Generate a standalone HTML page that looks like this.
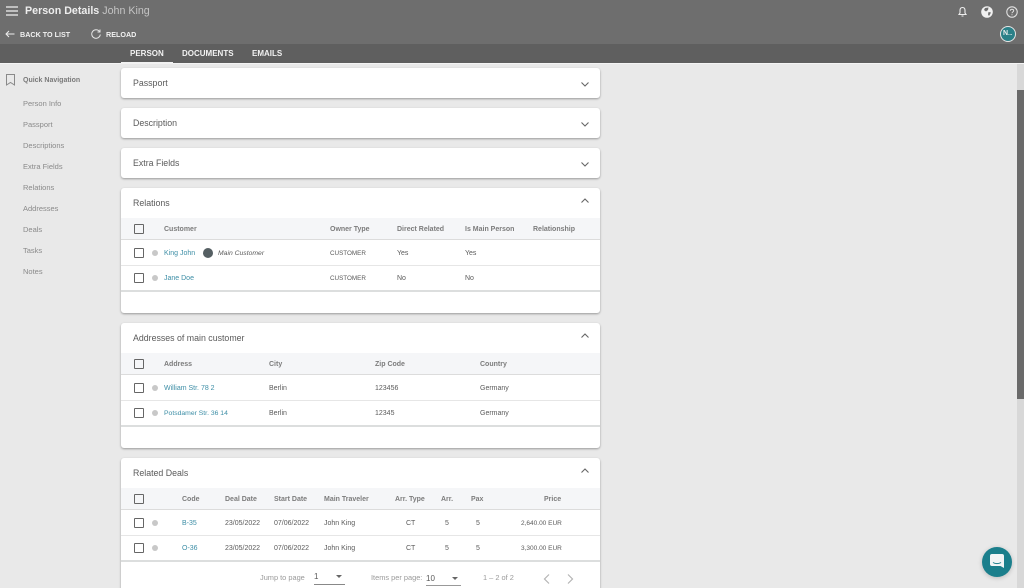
<!DOCTYPE html>
<html style="height:588px;overflow:hidden"><head><meta charset="utf-8"><style>
html,body{margin:0;padding:0}
body{width:1024px;height:588px;overflow:hidden;background:#e9e9e9;font-family:"Liberation Sans",sans-serif;color:#555}
#p{position:absolute;left:0;top:0;width:1024px;height:588px;overflow:hidden;background:#e9e9e9}
.a,.t{position:absolute}
.t{white-space:nowrap;line-height:12px;font-size:7px;color:#5a5a5a;margin-top:1px}
.n{font-size:7.5px;color:#8a8a8a;left:23px;margin-top:0}
.h{font-weight:bold;font-size:7px;color:#7c7c7c}
.l{color:#3d8ea6}
.ti{font-size:8.8px;color:#5a5a5a;left:133px;margin-top:0}
.pg{font-size:7.4px;color:#9a9a9a;margin-top:0}
.card{position:absolute;left:121px;width:479px;background:#fff;border-radius:3px;box-shadow:0 1px 2px rgba(0,0,0,.35)}
.cb{position:absolute;left:134px;width:8px;height:8px;border:1.2px solid #666;border-radius:1px}
.dot{position:absolute;left:152px;width:6px;height:6px;border-radius:50%;background:#c8c8c8}
.hd{position:absolute;left:121px;width:479px;height:21px;background:#f5f6f8;border-bottom:1px solid #dcdcdc}
.ln{position:absolute;left:121px;width:479px;height:1px;background:#e6e6e6}
.ln2{position:absolute;left:121px;width:479px;height:1.5px;background:#dcdede}
svg{position:absolute;overflow:visible}
.w{color:#f2f2f2;font-weight:bold;font-size:7.2px}
</style></head><body><div id="p">
<div class="a" style="left:0;top:0;width:1024px;height:44px;background:#6e6e6e"></div>
<div class="a" style="left:0;top:44px;width:1024px;height:19px;background:#5f5f5f"></div>
<div class="a" style="left:0;top:63px;width:1024px;height:1px;background:#f4f4f4"></div>
<div class="a" style="left:1017px;top:64px;width:7px;height:524px;background:#d8d8d8"></div>
<div class="a" style="left:1017px;top:90px;width:7px;height:309px;background:#6a6a6a"></div>

<svg style="left:6px;top:6px" width="12" height="10"><path d="M0 1H12M0 5H12M0 9H12" stroke="#f0f0f0" stroke-width="1.2"/></svg>
<div class="t" style="left:25px;top:5px;margin:0;font-size:10.7px;line-height:13px;font-weight:bold;color:#eee">Person Details <span style="font-weight:normal;color:#c4c4c4">John King</span></div>

<svg style="left:5px;top:30px" width="10" height="8"><path d="M9.500 4H1M4 1L1 4L4 7" fill="none" stroke="#eee" stroke-width="1"/></svg>
<div class="t w" style="left:20px;top:28px">BACK TO LIST</div>
<svg style="left:91px;top:29px" width="10" height="10"><path d="M8.500 2.500A4.300 4.300 0 1 0 9.300 5.500M9 .5V3H6.500" fill="none" stroke="#e4e4e4" stroke-width="1"/></svg>
<div class="t w" style="left:106px;top:28px">RELOAD</div>

<div class="t w" style="left:130px;top:47px;font-size:8px">PERSON</div>
<div class="t w" style="left:182px;top:47px;font-size:8px">DOCUMENTS</div>
<div class="t w" style="left:252px;top:47px;font-size:8px">EMAILS</div>
<div class="a" style="left:121px;top:62px;width:52px;height:1.500px;background:#f2f2f2"></div>

<svg style="left:957px;top:6px" width="11" height="12"><path d="M5.500 1.500C3.500 1.500 3 3 3 4.500V7L2 8.500H9L8 7V4.500C8 3 7.500 1.500 5.500 1.500Z" fill="none" stroke="#eee" stroke-width="1.100"/><path d="M4.500 10H6.500" stroke="#eee" stroke-width="1"/></svg>
<svg style="left:981px;top:6px" width="12" height="12"><circle cx="6" cy="6" r="5.800" fill="#f0f0f0"/><path d="M4 2L7.500 1.500L7 4L5 5.500L3 4ZM7.500 6L10 6.500L8 10L7 8.500Z" fill="#6e6e6e"/></svg>
<svg style="left:1006px;top:6px" width="12" height="12"><circle cx="6" cy="6" r="5.200" fill="none" stroke="#e0e0e0" stroke-width="1.100"/><path d="M4.300 4.700C4.300 2.800 7.700 2.800 7.700 4.700C7.700 6 6 5.800 6 7.300M6 8.300V9.300" fill="none" stroke="#e0e0e0" stroke-width="1"/></svg>
<div class="a" style="left:1000px;top:26px;width:14px;height:14px;border:1.300px solid #e6e6e6;border-radius:50%;background:#2b8088"></div>
<div class="t" style="left:1003px;top:27px;font-size:7px;font-weight:bold;color:#eee">N<span style="font-size:5px">...</span></div>

<svg style="left:6px;top:74px" width="9" height="12"><path d="M.5 .5H8.500V11L4.500 8.500L.5 11Z" fill="none" stroke="#8a8a8a" stroke-width="1"/></svg>
<div class="t" style="left:23px;top:74px;font-size:7px;font-weight:bold;color:#7a7a7a">Quick Navigation</div>
<div class="t n" style="top:98px">Person Info</div>
<div class="t n" style="top:119px">Passport</div>
<div class="t n" style="top:140px">Descriptions</div>
<div class="t n" style="top:161px">Extra Fields</div>
<div class="t n" style="top:182px">Relations</div>
<div class="t n" style="top:203px">Addresses</div>
<div class="t n" style="top:224px">Deals</div>
<div class="t n" style="top:245px">Tasks</div>
<div class="t n" style="top:266px">Notes</div>

<div class="card" style="top:68px;height:30px"></div>
<div class="card" style="top:108px;height:30px"></div>
<div class="card" style="top:148px;height:30px"></div>
<div class="card" style="top:188px;height:125px"></div>
<div class="card" style="top:323px;height:125px"></div>
<div class="card" style="top:458px;height:140px"></div>

<div class="t ti" style="top:77px">Passport</div>
<div class="t ti" style="top:117px">Description</div>
<div class="t ti" style="top:157px">Extra Fields</div>
<div class="t ti" style="top:197px">Relations</div>
<div class="t ti" style="top:332px">Addresses of main customer</div>
<div class="t ti" style="top:467px">Related Deals</div>

<svg style="left:581px;top:82px" width="8" height="5"><path d="M.5 .5L4 4L7.500 .5" fill="none" stroke="#666" stroke-width="1.100"/></svg>
<svg style="left:581px;top:122px" width="8" height="5"><path d="M.5 .5L4 4L7.500 .5" fill="none" stroke="#666" stroke-width="1.100"/></svg>
<svg style="left:581px;top:162px" width="8" height="5"><path d="M.5 .5L4 4L7.500 .5" fill="none" stroke="#666" stroke-width="1.100"/></svg>
<svg style="left:581px;top:198px" width="8" height="5"><path d="M.5 4.500L4 1L7.500 4.500" fill="none" stroke="#666" stroke-width="1.100"/></svg>
<svg style="left:581px;top:333px" width="8" height="5"><path d="M.5 4.500L4 1L7.500 4.500" fill="none" stroke="#666" stroke-width="1.100"/></svg>
<svg style="left:581px;top:468px" width="8" height="5"><path d="M.5 4.500L4 1L7.500 4.500" fill="none" stroke="#666" stroke-width="1.100"/></svg>

<!-- Relations -->
<div class="hd" style="top:218px"></div>
<div class="ln" style="top:265px"></div>
<div class="ln2" style="top:290px"></div>
<div class="cb" style="top:224px"></div><div class="cb" style="top:248px"></div><div class="cb" style="top:273px"></div>
<div class="dot" style="top:250px"></div><div class="dot" style="top:275px"></div>
<div class="t h" style="left:164px;top:223px">Customer</div>
<div class="t h" style="left:330px;top:223px">Owner Type</div>
<div class="t h" style="left:397px;top:223px">Direct Related</div>
<div class="t h" style="left:465px;top:223px">Is Main Person</div>
<div class="t h" style="left:533px;top:223px">Relationship</div>
<div class="t l" style="left:164px;top:247px">King John</div>
<div class="a" style="left:203px;top:248px;width:10px;height:10px;border-radius:50%;background:#555f63"></div>
<div class="t" style="left:218px;top:247px;font-style:italic;font-size:6.800px">Main Customer</div>
<div class="t" style="left:330px;top:247px;font-size:6.300px">CUSTOMER</div>
<div class="t" style="left:397px;top:247px">Yes</div>
<div class="t" style="left:465px;top:247px">Yes</div>
<div class="t l" style="left:164px;top:272px">Jane Doe</div>
<div class="t" style="left:330px;top:272px;font-size:6.300px">CUSTOMER</div>
<div class="t" style="left:397px;top:272px">No</div>
<div class="t" style="left:465px;top:272px">No</div>

<!-- Addresses -->
<div class="hd" style="top:353px"></div>
<div class="ln" style="top:400px"></div>
<div class="ln2" style="top:425px"></div>
<div class="cb" style="top:359px"></div><div class="cb" style="top:383px"></div><div class="cb" style="top:408px"></div>
<div class="dot" style="top:385px"></div><div class="dot" style="top:410px"></div>
<div class="t h" style="left:164px;top:358px">Address</div>
<div class="t h" style="left:269px;top:358px">City</div>
<div class="t h" style="left:375px;top:358px">Zip Code</div>
<div class="t h" style="left:480px;top:358px">Country</div>
<div class="t l" style="left:164px;top:382px">William Str. 78 2</div>
<div class="t" style="left:269px;top:382px">Berlin</div>
<div class="t" style="left:375px;top:382px">123456</div>
<div class="t" style="left:480px;top:382px">Germany</div>
<div class="t l" style="left:164px;top:407px;font-size:6.800px">Potsdamer Str. 36 14</div>
<div class="t" style="left:269px;top:407px">Berlin</div>
<div class="t" style="left:375px;top:407px">12345</div>
<div class="t" style="left:480px;top:407px">Germany</div>

<!-- Deals -->
<div class="hd" style="top:488px"></div>
<div class="ln" style="top:535px"></div>
<div class="ln2" style="top:560px"></div>
<div class="cb" style="top:494px"></div><div class="cb" style="top:518px"></div><div class="cb" style="top:543px"></div>
<div class="dot" style="top:520px"></div><div class="dot" style="top:545px"></div>
<div class="t h" style="left:182px;top:493px">Code</div>
<div class="t h" style="left:225px;top:493px">Deal Date</div>
<div class="t h" style="left:274px;top:493px">Start Date</div>
<div class="t h" style="left:324px;top:493px">Main Traveler</div>
<div class="t h" style="left:395px;top:493px">Arr. Type</div>
<div class="t h" style="left:441px;top:493px">Arr.</div>
<div class="t h" style="left:471px;top:493px">Pax</div>
<div class="t h" style="left:544px;top:493px">Price</div>
<div class="t l" style="left:182px;top:517px">B-35</div>
<div class="t" style="left:225px;top:517px">23/05/2022</div>
<div class="t" style="left:274px;top:517px">07/06/2022</div>
<div class="t" style="left:324px;top:517px">John King</div>
<div class="t" style="left:406px;top:517px">CT</div>
<div class="t" style="left:445px;top:517px">5</div>
<div class="t" style="left:476px;top:517px">5</div>
<div class="t" style="left:521px;top:517px;font-size:6.500px">2,640.00 EUR</div>
<div class="t l" style="left:182px;top:542px">O-36</div>
<div class="t" style="left:225px;top:542px">23/05/2022</div>
<div class="t" style="left:274px;top:542px">07/06/2022</div>
<div class="t" style="left:324px;top:542px">John King</div>
<div class="t" style="left:406px;top:542px">CT</div>
<div class="t" style="left:445px;top:542px">5</div>
<div class="t" style="left:476px;top:542px">5</div>
<div class="t" style="left:521px;top:542px;font-size:6.500px">3,300.00 EUR</div>

<div class="t pg" style="left:260px;top:572px">Jump to page</div>
<div class="t" style="left:314px;top:570px;font-size:8px">1</div>
<svg style="left:335px;top:575px" width="8" height="4"><path d="M1 0H7L4 3Z" fill="#666"/></svg>
<div class="a" style="left:314px;top:584px;width:31px;height:1px;background:#888"></div>
<div class="t pg" style="left:371px;top:572px">Items per page:</div>
<div class="t" style="left:426px;top:572px;font-size:8px">10</div>
<svg style="left:451px;top:577px" width="8" height="4"><path d="M1 0H7L4 3Z" fill="#666"/></svg>
<div class="a" style="left:426px;top:585px;width:35px;height:1px;background:#999"></div>
<div class="t pg" style="left:483px;top:572px">1 – 2 of 2</div>
<svg style="left:543px;top:574px" width="7" height="10"><path d="M6 .5L1.500 5L6 9.500" fill="none" stroke="#b4b4b4" stroke-width="1.200"/></svg>
<svg style="left:567px;top:574px" width="7" height="10"><path d="M1 .5L5.500 5L1 9.500" fill="none" stroke="#b4b4b4" stroke-width="1.200"/></svg>

<!-- Chat -->
<div class="a" style="left:982px;top:547px;width:30px;height:30px;border-radius:50%;background:#1b7f8c;box-shadow:0 1px 5px rgba(0,0,0,.2)"></div>
<svg style="left:990px;top:554px" width="14" height="15"><path d="M2 0H12A2 2 0 0 1 14 2V14L10.500 12H2A2 2 0 0 1 0 10V2A2 2 0 0 1 2 0Z" fill="#f2f5f6"/><path d="M3 8.500C5 10 9 10 11 8.500" fill="none" stroke="#1b7f8c" stroke-width="1"/></svg>
</div></body></html>
